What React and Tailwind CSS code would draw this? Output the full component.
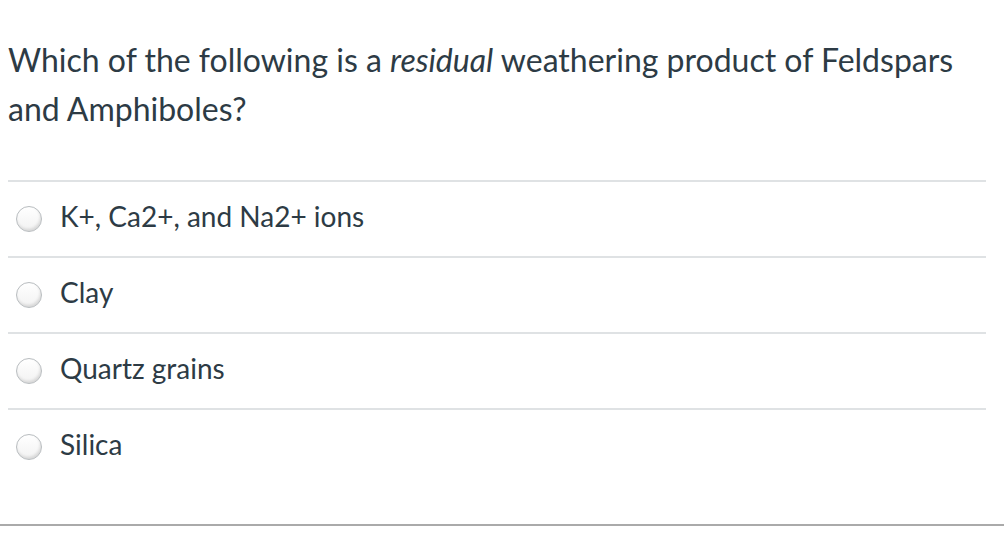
export default function App() {
  const options = ["K+, Ca2+, and Na2+ ions", "Clay", "Quartz grains", "Silica"];
  return (
    <div className="w-[1004px] h-[550px] bg-white relative" style={{ fontFamily: "Lato, 'Open Sans', sans-serif" }}>
      <div className="pl-2 pr-[18px] pt-[35px] text-[#2d3b45]">
        <p className="text-[32px] leading-[49px]">
          Which of the following is a <em>residual</em> weathering product of Feldspars and Amphiboles?
        </p>
        <div className="mt-[47px]">
          {options.map((o) => (
            <div key={o} className="border-t-2 border-[#dfe2e4] h-[76px] flex items-center">
              <div className="ml-2 w-[26px] h-[26px] rounded-full border border-[#b9bdc0] bg-gradient-to-b from-white to-[#f2f2f2] shadow-[inset_-1px_-2px_3px_rgba(0,0,0,0.12)] shrink-0" />
              <span className="ml-[18px] mb-[6px] text-[28px] leading-none">{o}</span>
            </div>
          ))}
        </div>
      </div>
      <div className="absolute left-0 right-0 top-[524px] h-[2px] bg-[#aaaaaa]" />
    </div>
  );
}
